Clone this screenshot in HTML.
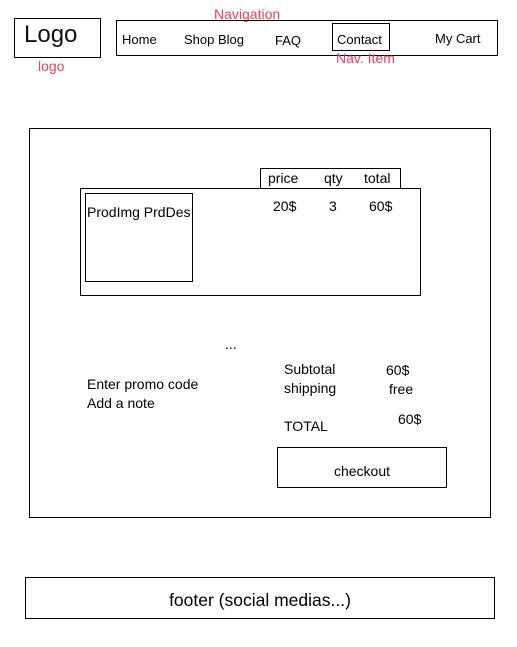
<!DOCTYPE html>
<html><head><style>
body{margin:0;width:517px;height:647px;background:#fff;position:relative;overflow:hidden;font-family:"Liberation Sans",sans-serif;font-size:14px;color:#000}
.b{position:absolute;border:1px solid #000;box-sizing:border-box}
.t{position:absolute;line-height:16px;white-space:nowrap}
.r{color:#ee3f5b;font-size:14px}
</style></head><body>
<div class="b" style="left:14px;top:18px;width:87px;height:40px"></div>
<div class="t" style="left:24px;top:22px;font-size:24px;line-height:26px;color:#111">Logo</div>
<div class="t r" style="left:38px;top:58px">logo</div>
<div class="t r" style="left:214px;top:6px">Navigation</div>
<div class="b" style="left:116px;top:20px;width:382px;height:36px"></div>
<div class="t" style="left:122px;top:32px;font-size:13px">Home</div>
<div class="t" style="left:184px;top:32px;font-size:13px">Shop Blog</div>
<div class="t" style="left:275px;top:33px;font-size:13px">FAQ</div>
<div class="b" style="left:332px;top:23px;width:58px;height:28px"></div>
<div class="t" style="left:337px;top:32px;font-size:13px">Contact</div>
<div class="t" style="left:435px;top:31px;font-size:13px">My Cart</div>
<div class="t r" style="left:336px;top:50px">Nav. Item</div>

<div class="b" style="left:29px;top:128px;width:462px;height:390px"></div>
<div class="b" style="left:260px;top:168px;width:141px;height:21px"></div>
<div class="t" style="left:268px;top:170px">price</div>
<div class="t" style="left:324px;top:170px">qty</div>
<div class="t" style="left:364px;top:170px">total</div>
<div class="b" style="left:80px;top:188px;width:341px;height:108px"></div>
<div class="b" style="left:85px;top:193px;width:108px;height:89px"></div>
<div class="t" style="left:87px;top:204px">ProdImg PrdDes</div>
<div class="t" style="left:273px;top:198px">20$</div>
<div class="t" style="left:329px;top:198px">3</div>
<div class="t" style="left:369px;top:198px">60$</div>
<div class="t" style="left:225px;top:336px">...</div>
<div class="t" style="left:284px;top:361px">Subtotal</div>
<div class="t" style="left:386px;top:362px">60$</div>
<div class="t" style="left:284px;top:380px">shipping</div>
<div class="t" style="left:389px;top:381px">free</div>
<div class="t" style="left:284px;top:418px">TOTAL</div>
<div class="t" style="left:398px;top:411px">60$</div>
<div class="t" style="left:87px;top:376px">Enter promo code</div>
<div class="t" style="left:87px;top:395px">Add a note</div>
<div class="b" style="left:277px;top:447px;width:170px;height:41px"></div>
<div class="t" style="left:277px;width:170px;text-align:center;top:463px">checkout</div>

<div class="b" style="left:25px;top:577px;width:470px;height:42px"></div>
<div class="t" style="left:25px;width:470px;text-align:center;top:590px;font-size:17.5px;line-height:20px">footer (social medias...)</div>
</body></html>
